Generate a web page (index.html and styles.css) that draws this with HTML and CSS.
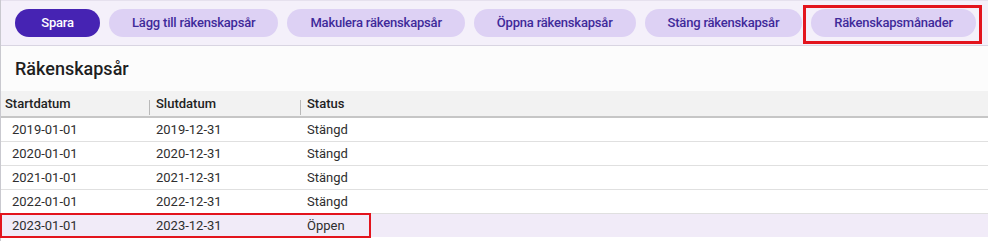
FILE: index.html
```html
<!DOCTYPE html>
<html lang="sv">
<head>
<meta charset="utf-8">
<title>Räkenskapsår</title>
<link rel="stylesheet" href="styles.css">
</head>
<body>
<div class="page">
  <div class="toolbar">
    <button class="btn btn-primary">Spara</button>
    <button class="btn">Lägg till räkenskapsår</button>
    <button class="btn">Makulera räkenskapsår</button>
    <button class="btn">Öppna räkenskapsår</button>
    <button class="btn">Stäng räkenskapsår</button>
    <span class="mark-btn"><button class="btn">Räkenskapsmånader</button></span>
  </div>
  <div class="panel">
    <h2 class="title">Räkenskapsår</h2>
    <table class="grid">
      <thead>
        <tr>
          <th class="c1">Startdatum</th>
          <th class="c2">Slutdatum</th>
          <th class="c3">Status</th>
          <th class="fill"></th>
        </tr>
      </thead>
      <tbody>
        <tr><td class="c1">2019-01-01</td><td class="c2">2019-12-31</td><td class="c3">Stängd</td><td class="fill"></td></tr>
        <tr><td class="c1">2020-01-01</td><td class="c2">2020-12-31</td><td class="c3">Stängd</td><td class="fill"></td></tr>
        <tr><td class="c1">2021-01-01</td><td class="c2">2021-12-31</td><td class="c3">Stängd</td><td class="fill"></td></tr>
        <tr><td class="c1">2022-01-01</td><td class="c2">2022-12-31</td><td class="c3">Stängd</td><td class="fill"></td></tr>
        <tr class="selected"><td class="c1"><span class="mark-row"></span>2023-01-01</td><td class="c2">2023-12-31</td><td class="c3">Öppen</td><td class="fill"></td></tr>
      </tbody>
    </table>
  </div>
</div>
</body>
</html>
```
FILE: styles.css
```css
* { box-sizing: border-box; }
html, body { margin: 0; padding: 0; background: #ffffff; }
body {
  font-family: Roboto, "Noto Sans", sans-serif;
  color: #2a2a2a;
  width: 988px;
  height: 241px;
  overflow: hidden;
}
.page {
  border-left: 1px solid #c9c9cf;
  min-height: 241px;
}
.toolbar {
  display: flex;
  align-items: center;
  gap: 9px;
  height: 46px;
  padding: 0 0 1px 14px;
  background: #f4f0fa;
  border-top: 1px solid #e6e1ee;
  border-bottom: 1px solid #d9d5e2;
}
.btn {
  flex-shrink: 0;
  white-space: nowrap;
  height: 28px;
  border: none;
  border-radius: 14px;
  padding: 0 23px;
  background: #ddd1f4;
  color: #3f2a9a;
  font-family: Roboto, "Noto Sans", sans-serif;
  font-weight: 500;
  font-size: 13px;
  letter-spacing: -0.2px;
  cursor: pointer;
}
.btn-primary {
  background: #4623b3;
  color: #ffffff;
  min-width: 85px;
}
.mark-btn {
  position: relative;
  display: inline-flex;
  flex-shrink: 0;
}
.mark-btn::after {
  content: "";
  position: absolute;
  left: -8px;
  right: -6px;
  top: -4px;
  bottom: -7px;
  border: 3px solid #e3141d;
  pointer-events: none;
}
.panel {
  background: #fcfcfc;
}
.title {
  margin: 0;
  height: 45px;
  padding: 12px 0 0 14px;
  font-size: 18px;
  font-weight: 500;
  color: #1f1f1f;
  line-height: 22px;
}
.grid {
  width: 100%;
  border-collapse: collapse;
  table-layout: fixed;
  background: #ffffff;
  font-size: 13px;
}
.grid th {
  background: #f2f2f2;
  height: 26px;
  text-align: left;
  font-weight: 500;
  color: #222;
  border-bottom: 2px solid #c6c6c6;
  padding: 0 0 0 7px;
  position: relative;
  vertical-align: middle;
}
.grid th.c1 { padding-left: 4px; }
.grid th.c2::before,
.grid th.c3::before {
  content: "";
  position: absolute;
  left: 0;
  top: 9px;
  bottom: 1px;
  border-left: 1px solid #b9b9b9;
}
.grid .c1 { width: 148px; }
.grid .c2 { width: 151px; }
.grid .c3 { width: 71px; }
.grid td {
  height: 24px;
  padding: 0 0 0 7px;
  color: #2e2e2e;
  border-bottom: 1px solid #e0e0e0;
  vertical-align: middle;
}
.grid td.c1 { padding-left: 11px; }
.grid tr.selected td {
  background: #f1ebf8;
  border-bottom: none;
}
.grid tr.selected td.c1 { position: relative; }
.mark-row {
  position: absolute;
  left: -1px;
  top: -1px;
  width: 371px;
  height: 25px;
  border: 2px solid #e3141d;
  pointer-events: none;
}
```
